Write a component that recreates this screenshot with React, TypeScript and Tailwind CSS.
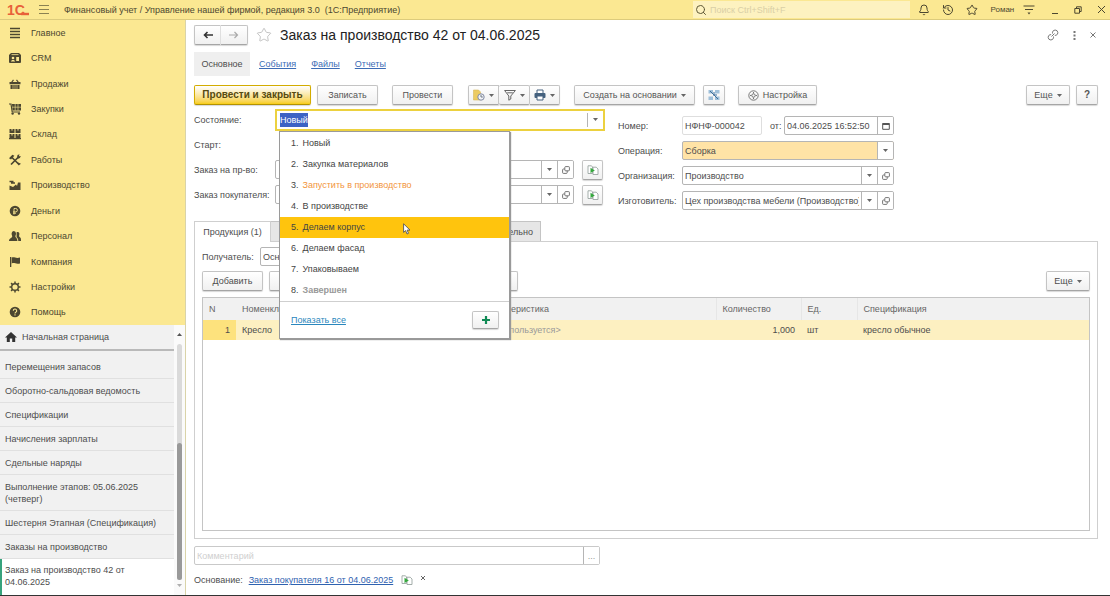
import { useState, type ReactNode } from "react";
import { Bell, History, Search, Star } from "lucide-react";
import clsx from "clsx";

const SECTIONS = [
  { icon: "main", label: "Главное" },
  { icon: "crm", label: "CRM" },
  { icon: "sales", label: "Продажи" },
  { icon: "cart", label: "Закупки" },
  { icon: "stock", label: "Склад" },
  { icon: "tools", label: "Работы" },
  { icon: "factory", label: "Производство" },
  { icon: "money", label: "Деньги" },
  { icon: "people", label: "Персонал" },
  { icon: "flag", label: "Компания" },
  { icon: "gear", label: "Настройки" },
  { icon: "help", label: "Помощь" },
];

const OPEN_WINDOWS = [
  "Перемещения запасов",
  "Оборотно-сальдовая ведомость",
  "Спецификации",
  "Начисления зарплаты",
  "Сдельные наряды",
  "Выполнение этапов: 05.06.2025 (четверг)",
  "Шестерня Этапная (Спецификация)",
  "Заказы на производство",
];

const STATES = [
  { label: "Новый", className: "" },
  { label: "Закупка материалов", className: "" },
  { label: "Запустить в производство", className: "text-[#f2953c]" },
  { label: "В производстве", className: "" },
  { label: "Делаем корпус", className: "" },
  { label: "Делаем фасад", className: "" },
  { label: "Упаковываем", className: "" },
  { label: "Завершен", className: "font-bold text-[#999]" },
];

const SECTION_ICONS: Record<string, ReactNode> = {
  main: <path d="M1 1.5h10M1 4.5h10M1 7.5h10M1 10.5h10" stroke="currentColor" strokeWidth="1.5" />,
  crm: (
    <>
      <path d="M2 1h8l2 2v7a1 1 0 0 1-1 1H1a1 1 0 0 1-1-1V3z" />
      <path d="M2 9.5c0-2 4-2 4 0z" fill="#fbe892" />
      <circle cx="4" cy="6" r="1.3" fill="#fbe892" />
      <path d="M7.2 5h2.8v4H7.2z" fill="#fbe892" />
      <path d="M2.5 2.6h7" stroke="#fbe892" strokeWidth="0.8" />
    </>
  ),
  sales: (
    <>
      <path d="M0.5 4h11v2.2h-11zM1.5 7h9v4h-9z" />
      <path d="M2.5 4.5 4.5 1.8M9.5 4.5 7.5 1.8" stroke="currentColor" strokeWidth="1.2" />
      <path d="M4 7v4M6 7v4M8 7v4" stroke="#fbe892" strokeWidth="0.6" />
    </>
  ),
  cart: (
    <>
      <path d="M0 1h2l1.2 8H11" stroke="currentColor" strokeWidth="1.2" fill="none" />
      <path d="M3 1h9v6.5H3.6z" />
      <circle cx="3.6" cy="10.6" r="1.2" />
      <circle cx="10" cy="10.6" r="1.2" />
      <path d="M3 4.2h9M6.2 1v6.5M9 1v6.5" stroke="#fbe892" strokeWidth="0.6" />
    </>
  ),
  stock: (
    <>
      <path d="M0.5 1h5v4h-5zM6.5 1h5v4h-5zM0.5 6h5v4h-5zM6.5 6h5v4h-5zM0 10h12v1.2H0z" />
      <path d="M3 1v1.6M9 1v1.6M3 6v1.6M9 6v1.6" stroke="#fbe892" strokeWidth="1" />
    </>
  ),
  tools: (
    <>
      <path d="M2 10.5 9.5 3M2.5 3l7.5 7.5" stroke="currentColor" strokeWidth="1.7" fill="none" />
      <path d="M0 4.2 3.4 0.8l2 1L2 5.6zM8 3.8 8.5 1l2-.7-.6 1.9 1.9-.3-.9 2.2-2 .6zM8.4 8.2 12 9.8 9.6 11.6z" />
    </>
  ),
  factory: (
    <>
      <path d="M0.5 11V6.5L4 8l3-2.5L8 7l1-3.5h2.5V11z" />
      <path d="M0.5 2.5h4M2 4h4" stroke="currentColor" strokeWidth="1.5" />
    </>
  ),
  money: (
    <>
      <circle cx="6" cy="6" r="5.3" />
      <path d="M5 9.5V3.5h1.7a1.6 1.6 0 0 1 0 3.4H4M4 8.2h3" stroke="#fbe892" strokeWidth="0.9" fill="none" />
    </>
  ),
  people: (
    <>
      <path d="M2.6 3.5a2.2 2.6 0 0 1 4.4 0c0 1.6-.6 2-.6 3 0 1 2 1.2 2 4.5H0c0-3 3.2-3 3.2-4.5 0-1-.6-1.5-.6-3z" />
      <path d="M7.6 2.2c2.6-.8 3.2 1.3 2.6 3-.5 1.3.2 1.6 1 2.2.8.6.8 1.6.8 3.6H9.3c0-2.5-1-3-1.7-3.8z" />
    </>
  ),
  flag: <path d="M1 1h1.3v10H1zM2.8 1.6c2.5-1.2 3.7 1.2 8.2 0v5.8c-4.2 1.2-5.5-1.2-8.2 0z" />,
  gear: (
    <>
      <circle cx="6" cy="6" r="3.3" fill="none" stroke="currentColor" strokeWidth="1.4" />
      <path
        d="M6 .5v2M6 9.5v2M.5 6h2M9.5 6h2M2.1 2.1l1.4 1.4M8.5 8.5l1.4 1.4M2.1 9.9l1.4-1.4M8.5 3.5l1.4-1.4"
        stroke="currentColor"
        strokeWidth="1.5"
      />
    </>
  ),
  help: (
    <>
      <circle cx="6" cy="6" r="5.3" />
      <path d="M4.3 4.8a1.7 1.7 0 1 1 2.5 1.4c-.6.3-.8.6-.8 1.2M6 8.3v1.2" stroke="#fbe892" strokeWidth="1.1" fill="none" />
    </>
  ),
};

function Caret() {
  return (
    <svg className="h-[3px] w-[5px] shrink-0" viewBox="0 0 5 3" fill="#666">
      <path d="M0 0h5L2.5 3z" />
    </svg>
  );
}

function OpenIcon() {
  return (
    <svg className="size-2" viewBox="0 0 8 8" fill="none" stroke="#666" strokeWidth="0.9">
      <rect x="2.8" y="0.6" width="4.6" height="4.2" rx="0.8" />
      <path d="M2.5 3H1.4a.8.8 0 0 0-.8.8v2.8a.8.8 0 0 0 .8.8h3a.8.8 0 0 0 .8-.8V5" />
    </svg>
  );
}

function FillIcon({ className }: { className?: string }) {
  return (
    <svg className={clsx("h-[10px] w-3", className)} viewBox="0 0 12 10" fill="#fff" stroke="#9aa5a2" strokeWidth="0.9">
      <path d="M1 .8h3.5l1 1.2v6.5H1z" />
      <path d="M6 2.2h3.2L11 4v5.5H6z" />
      <path d="M3.5 2.8 7.8 5.4 3.5 8z" fill="#35a83d" stroke="none" />
    </svg>
  );
}

function Button({ className, children, label }: { className?: string; children: ReactNode; label?: string }) {
  return (
    <button
      type="button"
      aria-label={label}
      className={clsx(
        "flex h-5 shrink-0 items-center justify-center gap-1 rounded-xs border border-[#c4c4c4] border-b-[#a5a5a5] bg-linear-to-b from-white to-[#f0f0f0] whitespace-nowrap shadow-[0_1px_1px_#d8d8d8]",
        className,
      )}
    >
      {children}
    </button>
  );
}

function FieldButton({ children, label, className }: { children: ReactNode; label: string; className?: string }) {
  return (
    <button
      type="button"
      aria-label={label}
      className={clsx("flex w-4 shrink-0 items-center justify-center self-stretch border-l border-[#b5b5b5] bg-white", className)}
    >
      {children}
    </button>
  );
}

function RefField({ id, value, className }: { id: string; value: string; className?: string }) {
  return (
    <div className={clsx("flex h-[19px] items-center overflow-hidden rounded-xs border border-[#b5b5b5] bg-white", className)}>
      <input id={id} defaultValue={value} className="min-w-0 flex-1 px-[2px] outline-none" />
      <FieldButton label="Выбрать">
        <Caret />
      </FieldButton>
      <FieldButton label="Открыть">
        <OpenIcon />
      </FieldButton>
    </div>
  );
}

function TitleBar() {
  return (
    <header className="flex h-5 shrink-0 items-center border-b border-[#dccb7c] bg-[#fbe892] text-[#4c4730]">
      <div className="flex w-[30px] items-center pl-[7px] text-[#e8603a]">
        <span className="text-[14px] leading-4 font-bold">1С</span>
        <svg className="-ml-1 h-3 w-2 shrink-0" viewBox="0 0 8 12" stroke="currentColor" fill="none">
          <path d="M0 10h8" strokeWidth="2.4" />
        </svg>
      </div>
      <button type="button" aria-label="Меню" className="ml-2 flex w-3">
        <svg className="h-[9px] w-3" viewBox="0 0 12 9" stroke="#8a8152">
          <path d="M1 .5h10M1 4.5h10M1 8.5h10" />
        </svg>
      </button>
      <div className="ml-[14px] whitespace-nowrap">
        Финансовый учет / Управление нашей фирмой, редакция 3.0&nbsp; (1С:Предприятие)
      </div>
      <label className="ml-auto flex h-[17px] w-[217px] items-center gap-[3px] bg-[#fdf2c0] pl-[2px]">
        <Search className="size-3 shrink-0 text-[#5f5937]" />
        <input
          aria-label="Поиск"
          placeholder="Поиск Ctrl+Shift+F"
          className="min-w-0 flex-1 outline-none placeholder:text-[#d9cfa6]"
        />
      </label>
      <div className="flex w-[200px] shrink-0 items-center justify-between pr-1 pl-2">
        <Bell className="mr-[3px] size-3" />
        <History className="mr-[3px] size-3" />
        <Star className="mr-[3px] size-3" />
        <span className="text-[8px]">Роман</span>
        <svg className="h-[10px] w-3" viewBox="0 0 12 10" stroke="currentColor">
          <path d="M.5 1h11M2 4.5h8" />
          <path d="M4.5 7.5h3L6 9.5z" fill="currentColor" stroke="none" />
        </svg>
        <svg className="mx-[6px] size-2" viewBox="0 0 8 8" stroke="currentColor">
          <path d="M1 7.5h6" />
        </svg>
        <svg className="mr-[6px] size-2" viewBox="0 0 8 8" fill="none" stroke="currentColor">
          <path d="M.8 2.5h4.7v4.7H.8zM2.5 2.5V.8h4.7v4.7H5.5" />
        </svg>
        <svg className="size-[9px]" viewBox="0 0 9 9" stroke="currentColor">
          <path d="m1 1 7 7M8 1 1 8" />
        </svg>
      </div>
    </header>
  );
}

function Sidebar() {
  return (
    <aside className="flex w-[186px] shrink-0 flex-col border-r border-[#d9d3a8] bg-[#f1f1f1]">
      <nav className="flex h-[305px] shrink-0 flex-col bg-[#fbe892]">
        {SECTIONS.map((s) => (
          <a key={s.label} href="#" className="flex flex-1 items-center gap-[10px] pl-[9px] text-[#4c4730]">
            <svg className="size-3" viewBox="0 0 12 12" fill="currentColor">
              {SECTION_ICONS[s.icon]}
            </svg>
            {s.label}
          </a>
        ))}
      </nav>
      <div className="flex min-h-0 flex-1">
        <div className="flex min-w-0 flex-1 flex-col">
          <a href="#" className="flex h-[26px] shrink-0 items-center gap-[5px] border-b-2 border-[#b9b9b9] pl-[5px]">
            <svg className="h-[10px] w-3" viewBox="0 0 12 10" fill="#333">
              <path d="M6 0 0 5.5h1.8V10h3V6.5h2.4V10h3V5.5H12z" />
            </svg>
            Начальная страница
          </a>
          <div className="h-1 shrink-0" />
          {OPEN_WINDOWS.map((w) => (
            <a key={w} href="#" className="border-b border-[#e0e0e0] py-[5px] pr-2 pl-[5px]">
              <span className="block pt-px">{w}</span>
            </a>
          ))}
          <a href="#" className="flex-1 border-l-2 border-[#37a27c] bg-white py-[5px] pr-2 pl-[3px]">
            Заказ на производство 42 от 04.06.2025
          </a>
        </div>
        <div className="flex w-[11px] flex-col items-center bg-[#fafafa] py-2">
          <svg className="h-[3px] w-[5px] shrink-0" viewBox="0 0 5 3" fill="#555">
            <path d="M0 3h5L2.5 0z" />
          </svg>
          <div className="mt-2 flex w-[5px] flex-1 flex-col justify-end rounded-full bg-[#dadada]">
            <div className="h-[58%] rounded-full bg-[#999]" />
          </div>
          <div className="mt-1 opacity-50">
            <Caret />
          </div>
        </div>
      </div>
    </aside>
  );
}

function Toolbar() {
  return (
    <div className="mt-[9px] flex items-center text-[#555]">
      <Button className="w-[117px] border-[#d3ac00] border-b-[#b39200] from-[#ffe11a] to-[#f8cd00] text-[10px] font-bold text-[#574b10]">
        Провести и закрыть
      </Button>
      <Button className="ml-[6px] w-[61px]">Записать</Button>
      <Button className="ml-[14px] w-[61px]">Провести</Button>
      <div className="ml-[15px] flex">
        <Button label="Движения" className="w-[31px] rounded-r-none">
          <svg className="size-3" viewBox="0 0 12 12">
            <path d="M.5 1h5l2 2v8h-7z" fill="#eccb62" stroke="#d9b95a" strokeWidth="0.6" />
            <circle cx="8" cy="8" r="3.2" fill="#f2f4f7" stroke="#8089a0" />
            <path d="M8 6v2h1.8" stroke="#6d7785" fill="none" />
          </svg>
          <Caret />
        </Button>
        <Button label="Отбор" className="w-[31px] rounded-none border-l-0">
          <svg className="size-3" viewBox="0 0 12 12" fill="none" stroke="#666">
            <path d="M.6 1.5h10.8L6.8 7v3l-2 1.2V7z" />
            <path d="M3.2 3.8h5.6" />
          </svg>
          <Caret />
        </Button>
        <Button label="Печать" className="w-[30px] rounded-l-none border-l-0">
          <svg className="size-3" viewBox="0 0 12 12">
            <path d="M3 4V1h6v3" fill="#fff" stroke="#44617e" />
            <rect x="0.5" y="4" width="11" height="5" rx="1" fill="#44617e" />
            <path d="M3 7h6v4H3z" fill="#fff" stroke="#44617e" />
          </svg>
          <Caret />
        </Button>
      </div>
      <Button className="ml-[14px] w-[121px]">
        Создать на основании <Caret />
      </Button>
      <Button label="Структура подчиненности" className="ml-2 w-[22px]">
        <svg className="size-3" viewBox="0 0 12 12">
          <path d="M.5 1H5v3.500H.5zM7 1h4.500v3.500H7zM.5 7.500H5V11H.5zM7 7.500h4.500V11H7z" fill="#9fc0da" />
          <path d="m2 2 8 8M5 6h4M6 3v3" stroke="#3d6f9b" fill="none" />
        </svg>
      </Button>
      <Button className="ml-[13px] w-[79px]">
        <svg className="size-[11px]" viewBox="0 0 11 11" fill="none" stroke="#777">
          <circle cx="5.5" cy="5.5" r="4.7" />
          <circle cx="5.5" cy="5.5" r="1.7" />
          <path d="M5.5 2v1.5M5.5 7.5V9M2 5.5h1.5M7.5 5.5H9" />
        </svg>
        Настройка
      </Button>
      <Button className="ml-auto w-11">
        Еще <Caret />
      </Button>
      <Button className="ml-[6px] w-[22px] text-[10px] font-bold">?</Button>
    </div>
  );
}

function StateDropdown() {
  const [active, setActive] = useState(4);

  return (
    <div className="absolute top-[22px] left-1 z-10 w-[231px] border border-[#9a9a9a] bg-white pt-px shadow-[1px_1px_1px_#999]">
      <ul role="listbox" className="text-[#444]">
        {STATES.map((s, i) => (
          <li
            key={s.label}
            role="option"
            aria-selected={i === active}
            onMouseEnter={() => setActive(i)}
            className={clsx("relative flex h-[21px] items-center gap-1 pl-[11px]", i === active && "bg-[#ffc40d]")}
          >
            <span>{i + 1}.</span>
            <span className={s.className}>{s.label}</span>
            {i === 4 && (
              <svg className="absolute top-[6px] left-[123px] h-3 w-2" viewBox="0 0 8 12" fill="#fff" stroke="#555" strokeWidth="0.9">
                <path d="M.6.8v8.600l2-1.800L4 11l1.500-.7-1.400-3.200h2.900z" />
              </svg>
            )}
          </li>
        ))}
      </ul>
      <div className="flex h-[37px] items-center justify-between border-t border-[#cfcfcf] pr-[10px] pl-[11px]">
        <a href="#" className="text-[#2a87bd] underline">
          Показать все
        </a>
        <Button label="Создать" className="h-[18px] w-[27px]">
          <svg className="size-2" viewBox="0 0 8 8" stroke="#108a55" strokeWidth="2.2">
            <path d="M4 0v8M0 4h8" />
          </svg>
        </Button>
      </div>
    </div>
  );
}

function OrderFields() {
  return (
    <div className="mt-[2px] flex">
      <div className="grid w-[411px] shrink-0 auto-rows-[25px] grid-cols-[81px_1fr] items-center">
        <label htmlFor="state">Состояние:</label>
        <div className="relative">
          <div className="flex h-[22px] items-center border-2 border-[#ecd13f] bg-white pl-[3px]">
            <input
              id="state"
              autoFocus
              onFocus={(e) => e.target.select()}
              defaultValue="Новый"
              className="h-[14px] min-w-0 flex-1 leading-[14px] outline-none selection:bg-[#3c62c4] selection:text-white"
            />
            <FieldButton label="Выбрать" className="my-[2px]">
              <Caret />
            </FieldButton>
          </div>
          <StateDropdown />
        </div>
        <div className="col-span-2">Старт:</div>
        <label htmlFor="order">Заказ на пр-во:</label>
        <div className="flex items-center gap-2">
          <RefField id="order" value="" className="w-[299px]" />
          <Button label="Заполнить" className="w-[21px]">
            <FillIcon />
          </Button>
        </div>
        <label htmlFor="customer" className="whitespace-nowrap">
          Заказ покупателя:
        </label>
        <div className="flex items-center gap-2">
          <RefField id="customer" value="" className="w-[299px]" />
          <Button label="Заполнить" className="w-[21px]">
            <FillIcon />
          </Button>
        </div>
      </div>

      <div className="mt-[6px] ml-[13px] grid w-[276px] auto-rows-[25px] grid-cols-[64px_1fr] items-center">
        <label htmlFor="number">Номер:</label>
        <div className="flex items-center">
          <input
            id="number"
            defaultValue="НФНФ-000042"
            className="h-[19px] w-20 rounded-xs border border-[#dedede] px-[2px] outline-none"
          />
          <label htmlFor="date" className="ml-2">
            от:
          </label>
          <div className="ml-auto flex h-[19px] w-[110px] items-center overflow-hidden rounded-xs border border-[#b5b5b5]">
            <input id="date" defaultValue="04.06.2025 16:52:50" className="min-w-0 flex-1 px-[2px] outline-none" />
            <FieldButton label="Календарь">
              <svg className="size-2" viewBox="0 0 8 8" fill="none" stroke="#555">
                <path d="M.7 1.5h6.6v5.8H.7z" />
                <path d="M.7 2h6.6" strokeWidth="1.8" />
              </svg>
            </FieldButton>
          </div>
        </div>
        <label htmlFor="operation">Операция:</label>
        <div className="flex h-[19px] items-center overflow-hidden rounded-xs border border-[#b5b5b5] bg-[#ffe3a6]">
          <select id="operation" className="min-w-0 flex-1 appearance-none px-[2px] outline-none">
            <option>Сборка</option>
          </select>
          <FieldButton label="Выбрать">
            <Caret />
          </FieldButton>
        </div>
        <label htmlFor="org">Организация:</label>
        <RefField id="org" value="Производство" />
        <label htmlFor="maker">Изготовитель:</label>
        <RefField id="maker" value="Цех производства мебели (Производство)" />
      </div>
    </div>
  );
}

function Products() {
  return (
    <section className="mt-2 flex min-h-0 flex-1 flex-col">
      <div className="flex h-5 shrink-0 items-stretch">
        <button type="button" className="relative z-1 -mb-px w-[77px] border border-b-0 border-[#cfcfcf] bg-white">
          Продукция (1)
        </button>
        <button type="button" className="w-[270px] border border-b-0 border-l-0 border-[#c4c4c4] bg-[#e6e6e6] pr-[7px] text-right">
          Дополнительно
        </button>
      </div>
      <div className="flex min-h-0 flex-1 flex-col border border-[#cfcfcf] p-[7px] pt-[5px]">
        <div className="flex items-center">
          <label htmlFor="receiver" className="w-[58px]">
            Получатель:
          </label>
          <RefField id="receiver" value="Основной склад" className="w-[200px]" />
        </div>
        <div className="mt-[5px] flex">
          <Button className="w-[61px]">Добавить</Button>
          <Button label="Подбор" className="ml-[6px] w-[249px]">
            Подбор
          </Button>
          <Button className="ml-auto w-11">
            Еще <Caret />
          </Button>
        </div>
        <div className="mt-[6px] min-h-0 flex-1 border border-[#c4c4c4]">
          <table className="w-full table-fixed border-collapse text-left">
            <colgroup>
              <col className="w-[33px]" />
              <col className="w-[240px]" />
              <col />
              <col className="w-[85px]" />
              <col className="w-[56px]" />
              <col className="w-[232px]" />
            </colgroup>
            <thead>
              <tr className="h-[22px] bg-[#f1f1f1] text-[#666]">
                <th className="px-[6px] font-normal">N</th>
                <th className="px-[6px] font-normal">Номенклатура</th>
                <th className="border-r border-[#e6e6e6] px-[6px] font-normal">Характеристика</th>
                <th className="border-r border-[#e6e6e6] px-[6px] font-normal">Количество</th>
                <th className="border-r border-[#e6e6e6] px-[6px] font-normal">Ед.</th>
                <th className="px-[6px] font-normal">Спецификация</th>
              </tr>
            </thead>
            <tbody>
              <tr className="h-5 bg-[#fdf0c1]">
                <td className="bg-[#fde27d] px-[6px] text-right">1</td>
                <td className="px-[6px]">Кресло</td>
                <td className="px-[6px] text-[#999]">&lt;не используется&gt;</td>
                <td className="px-[6px] text-right">1,000</td>
                <td className="px-[6px]">шт</td>
                <td className="px-[6px]">кресло обычное</td>
              </tr>
            </tbody>
          </table>
        </div>
      </div>
    </section>
  );
}

export default function App() {
  return (
    <div className="flex h-screen flex-col overflow-hidden border-b border-[#333] bg-white font-['Liberation_Sans',Arial,sans-serif] text-[9px] leading-3 text-[#4d4d4d]">
      <TitleBar />
      <div className="flex min-h-0 flex-1">
        <Sidebar />
        <main className="flex min-w-0 flex-1 flex-col pt-[5px] pr-3 pl-2">
          <div className="flex h-5 items-center">
            <div className="flex">
              <Button label="Назад" className="w-[27px] rounded-r-none border-r-[#e0e0e0]">
                <svg className="h-2 w-[10px]" viewBox="0 0 10 8" stroke="#333" strokeWidth="1.6" fill="none">
                  <path d="M10 4H1.500M4.500 1l-3 3 3 3" />
                </svg>
              </Button>
              <Button label="Вперед" className="w-[27px] rounded-l-none border-l-0">
                <svg className="h-2 w-[10px]" viewBox="0 0 10 8" stroke="#aaa" strokeWidth="1.2" fill="none">
                  <path d="M0 4h8.500M5.500 1l3 3-3 3" />
                </svg>
              </Button>
            </div>
            <Star className="ml-2 size-4 text-[#b5b5b5]" strokeWidth={1.2} />
            <h1 className="ml-2 text-[14px] leading-4 text-[#222]">Заказ на производство 42 от 04.06.2025</h1>
            <div className="ml-auto flex items-center gap-[14px] text-[#777]">
              <svg className="size-3" viewBox="0 0 12 12" fill="none" stroke="currentColor">
                <path d="M5.500 4.500V3.200A2.700 2.700 0 1 1 9 6.300H7.800M6.500 7.500v1.300A2.700 2.700 0 1 1 3 5.700h1.200M4.500 7.500l3-3" />
              </svg>
              <svg className="h-[9px] w-[3px]" viewBox="0 0 3 9" fill="currentColor">
                <path d="M.5 0h2v2h-2zM.5 3.500h2v2h-2zM.5 7h2v2h-2z" />
              </svg>
              <svg className="mr-[2px] size-[6px]" viewBox="0 0 6 6" stroke="currentColor">
                <path d="m.5.5 5 5M5.500.5l-5 5" />
              </svg>
            </div>
          </div>

          <nav className="mt-[7px] flex h-6 items-center gap-[15px] text-[#3c6cb5]">
            <span className="-mr-[6px] flex h-6 w-14 items-center justify-center bg-[#efefef] text-[#4d4d4d]">Основное</span>
            <a href="#" className="underline">
              События
            </a>
            <a href="#" className="underline">
              Файлы
            </a>
            <a href="#" className="underline">
              Отчеты
            </a>
          </nav>

          <Toolbar />
          <OrderFields />
          <Products />

          <div className="mt-[7px] flex h-[19px] w-[406px] shrink-0 items-center rounded-xs border border-[#c9c9c9]">
            <input
              aria-label="Комментарий"
              placeholder="Комментарий"
              className="min-w-0 flex-1 px-[2px] outline-none placeholder:text-[#cfcfcf]"
            />
            <FieldButton label="Выбрать">
              <span className="text-[#999]">...</span>
            </FieldButton>
          </div>
          <div className="flex h-[30px] shrink-0 items-center">
            Основание:
            <a href="#" className="ml-[6px] text-[#2f62b0] underline">
              Заказ покупателя 16 от 04.06.2025
            </a>
            <FillIcon className="ml-2" />
            <svg className="mb-1 ml-2 size-1" viewBox="0 0 4 4" stroke="#666">
              <path d="m0 0 4 4M4 0 0 4" />
            </svg>
          </div>
        </main>
      </div>
    </div>
  );
}
